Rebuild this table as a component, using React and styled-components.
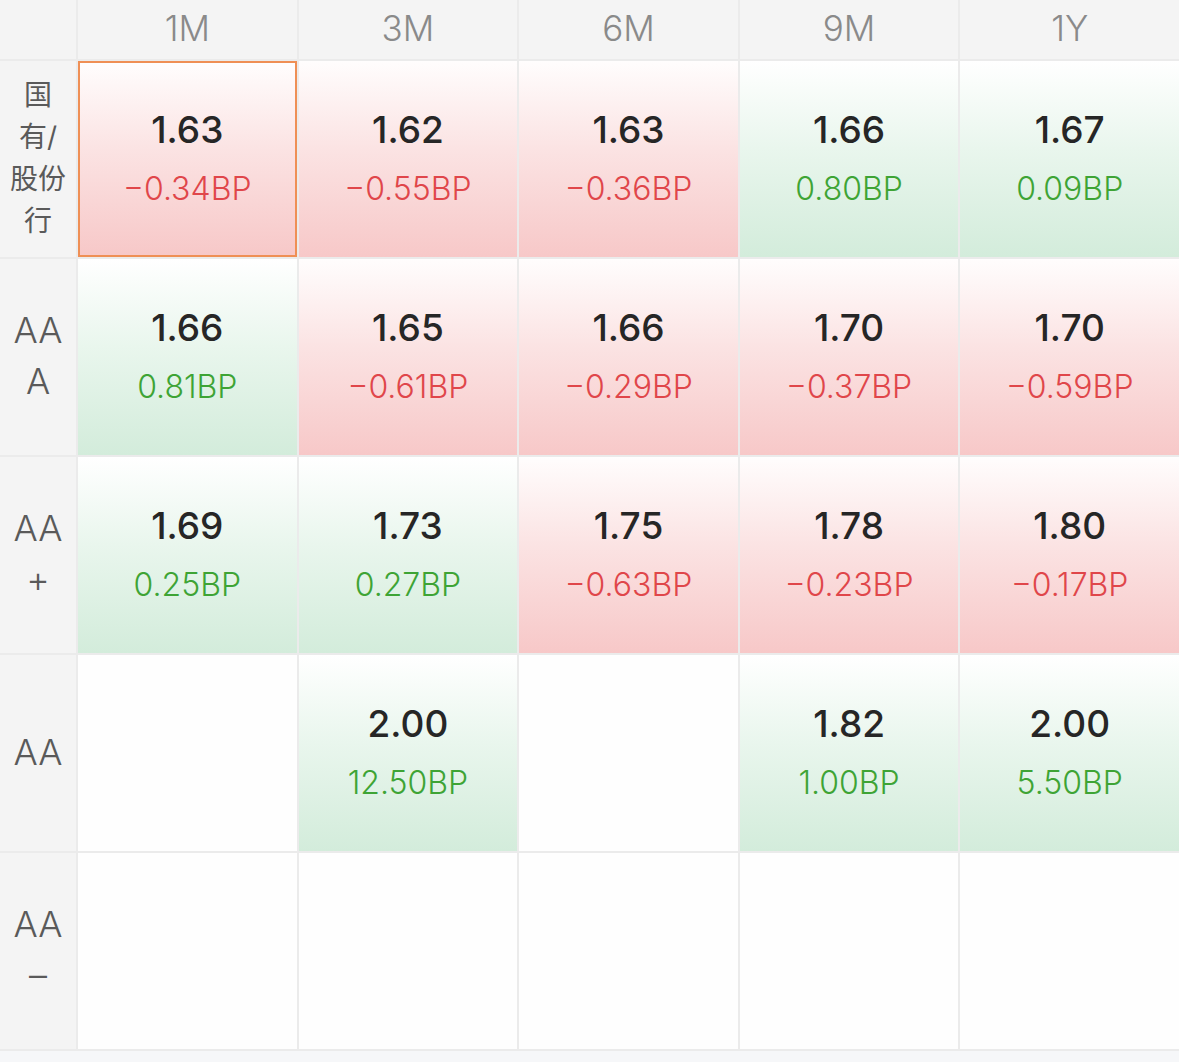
import React from "react";
import styled, { createGlobalStyle } from "styled-components";

const GlobalStyle = createGlobalStyle`
  html, body {
    margin: 0;
    padding: 0;
    background: #f6f7f9;
    font-family: "Inter", "Noto Sans CJK SC", sans-serif;
  }
`;

const tenors = ["1M", "3M", "6M", "9M", "1Y"];

const rows = [
  {
    label: ["国", "有/", "股份", "行"],
    cjk: true,
    cells: [
      { v: "1.63", d: -0.34 },
      { v: "1.62", d: -0.55 },
      { v: "1.63", d: -0.36 },
      { v: "1.66", d: 0.8 },
      { v: "1.67", d: 0.09 },
    ],
  },
  {
    label: ["AA", "A"],
    cells: [
      { v: "1.66", d: 0.81 },
      { v: "1.65", d: -0.61 },
      { v: "1.66", d: -0.29 },
      { v: "1.70", d: -0.37 },
      { v: "1.70", d: -0.59 },
    ],
  },
  {
    label: ["AA", "+"],
    cells: [
      { v: "1.69", d: 0.25 },
      { v: "1.73", d: 0.27 },
      { v: "1.75", d: -0.63 },
      { v: "1.78", d: -0.23 },
      { v: "1.80", d: -0.17 },
    ],
  },
  {
    label: ["AA"],
    cells: [
      null,
      { v: "2.00", d: 12.5 },
      null,
      { v: "1.82", d: 1.0 },
      { v: "2.00", d: 5.5 },
    ],
  },
  {
    label: ["AA", "–"],
    cells: [null, null, null, null, null],
  },
];

const formatBp = (d) =>
  (d < 0 ? "\u2212" : "") + Math.abs(d).toFixed(2) + "BP";

export default function App() {
  return (
    <>
      <GlobalStyle />
      <Page>
        <Grid>
          <Corner />
          {tenors.map((t) => (
            <HeaderCell key={t}>{t}</HeaderCell>
          ))}
          {rows.map((row, ri) => (
            <React.Fragment key={ri}>
              <RowLabel $cjk={row.cjk}>
                {row.label.map((l, i) => (
                  <span key={i}>{l}</span>
                ))}
              </RowLabel>
              {row.cells.map((c, ci) =>
                c ? (
                  <Cell
                    key={ci}
                    $tone={c.d < 0 ? "down" : "up"}
                    $selected={ri === 0 && ci === 0}
                  >
                    <Value>{c.v}</Value>
                    <Change $tone={c.d < 0 ? "down" : "up"}>{formatBp(c.d)}</Change>
                  </Cell>
                ) : (
                  <Cell key={ci} $tone="none" />
                )
              )}
            </React.Fragment>
          ))}
        </Grid>
      </Page>
    </>
  );
}

const Page = styled.div`
  width: 1179px;
  height: 1062px;
  background: #f6f7f9;
  overflow: hidden;
`;

const Grid = styled.div`
  display: grid;
  grid-template-columns: 76px repeat(5, 1fr);
  grid-template-rows: 59px repeat(5, 196px);
  gap: 2px;
  background: #ebebeb;
  padding-bottom: 2px;
`;

const Corner = styled.div`
  background: #f4f4f4;
`;

const HeaderCell = styled.div`
  background: #f4f4f4;
  display: flex;
  align-items: center;
  justify-content: center;
  color: #8a8a8a;
  font-size: 35px;
  font-weight: 300;
  padding-bottom: 3px;
`;

const RowLabel = styled.div`
  background: #f4f4f4;
  display: flex;
  flex-direction: column;
  align-items: center;
  justify-content: center;
  color: #5a5a5a;
  font-size: ${(p) => (p.$cjk ? "28px" : "36px")};
  font-weight: ${(p) => (p.$cjk ? 400 : 300)};
  line-height: ${(p) => (p.$cjk ? "42px" : "51px")};
  padding-bottom: 2px;
`;

const backgrounds = {
  down: "linear-gradient(180deg, #fffdfd 0%, #fbe3e3 45%, #f7c8c8 100%)",
  up: "linear-gradient(180deg, #ffffff 0%, #e9f6ed 45%, #d3ecdb 100%)",
  none: "#fefefe",
};

const Cell = styled.div`
  background: ${(p) => backgrounds[p.$tone]};
  display: flex;
  flex-direction: column;
  align-items: center;
  justify-content: center;
  gap: 18px;
  box-sizing: border-box;
  border: ${(p) => (p.$selected ? "2px solid #ef8f55" : "none")};
`;

const Value = styled.div`
  color: #262626;
  font-size: 37px;
  font-weight: 500;
  line-height: 42px;
`;

const Change = styled.div`
  color: ${(p) => (p.$tone === "down" ? "#e0464a" : "#3ea435")};
  font-size: 32px;
  font-weight: 300;
  line-height: 40px;
`;
